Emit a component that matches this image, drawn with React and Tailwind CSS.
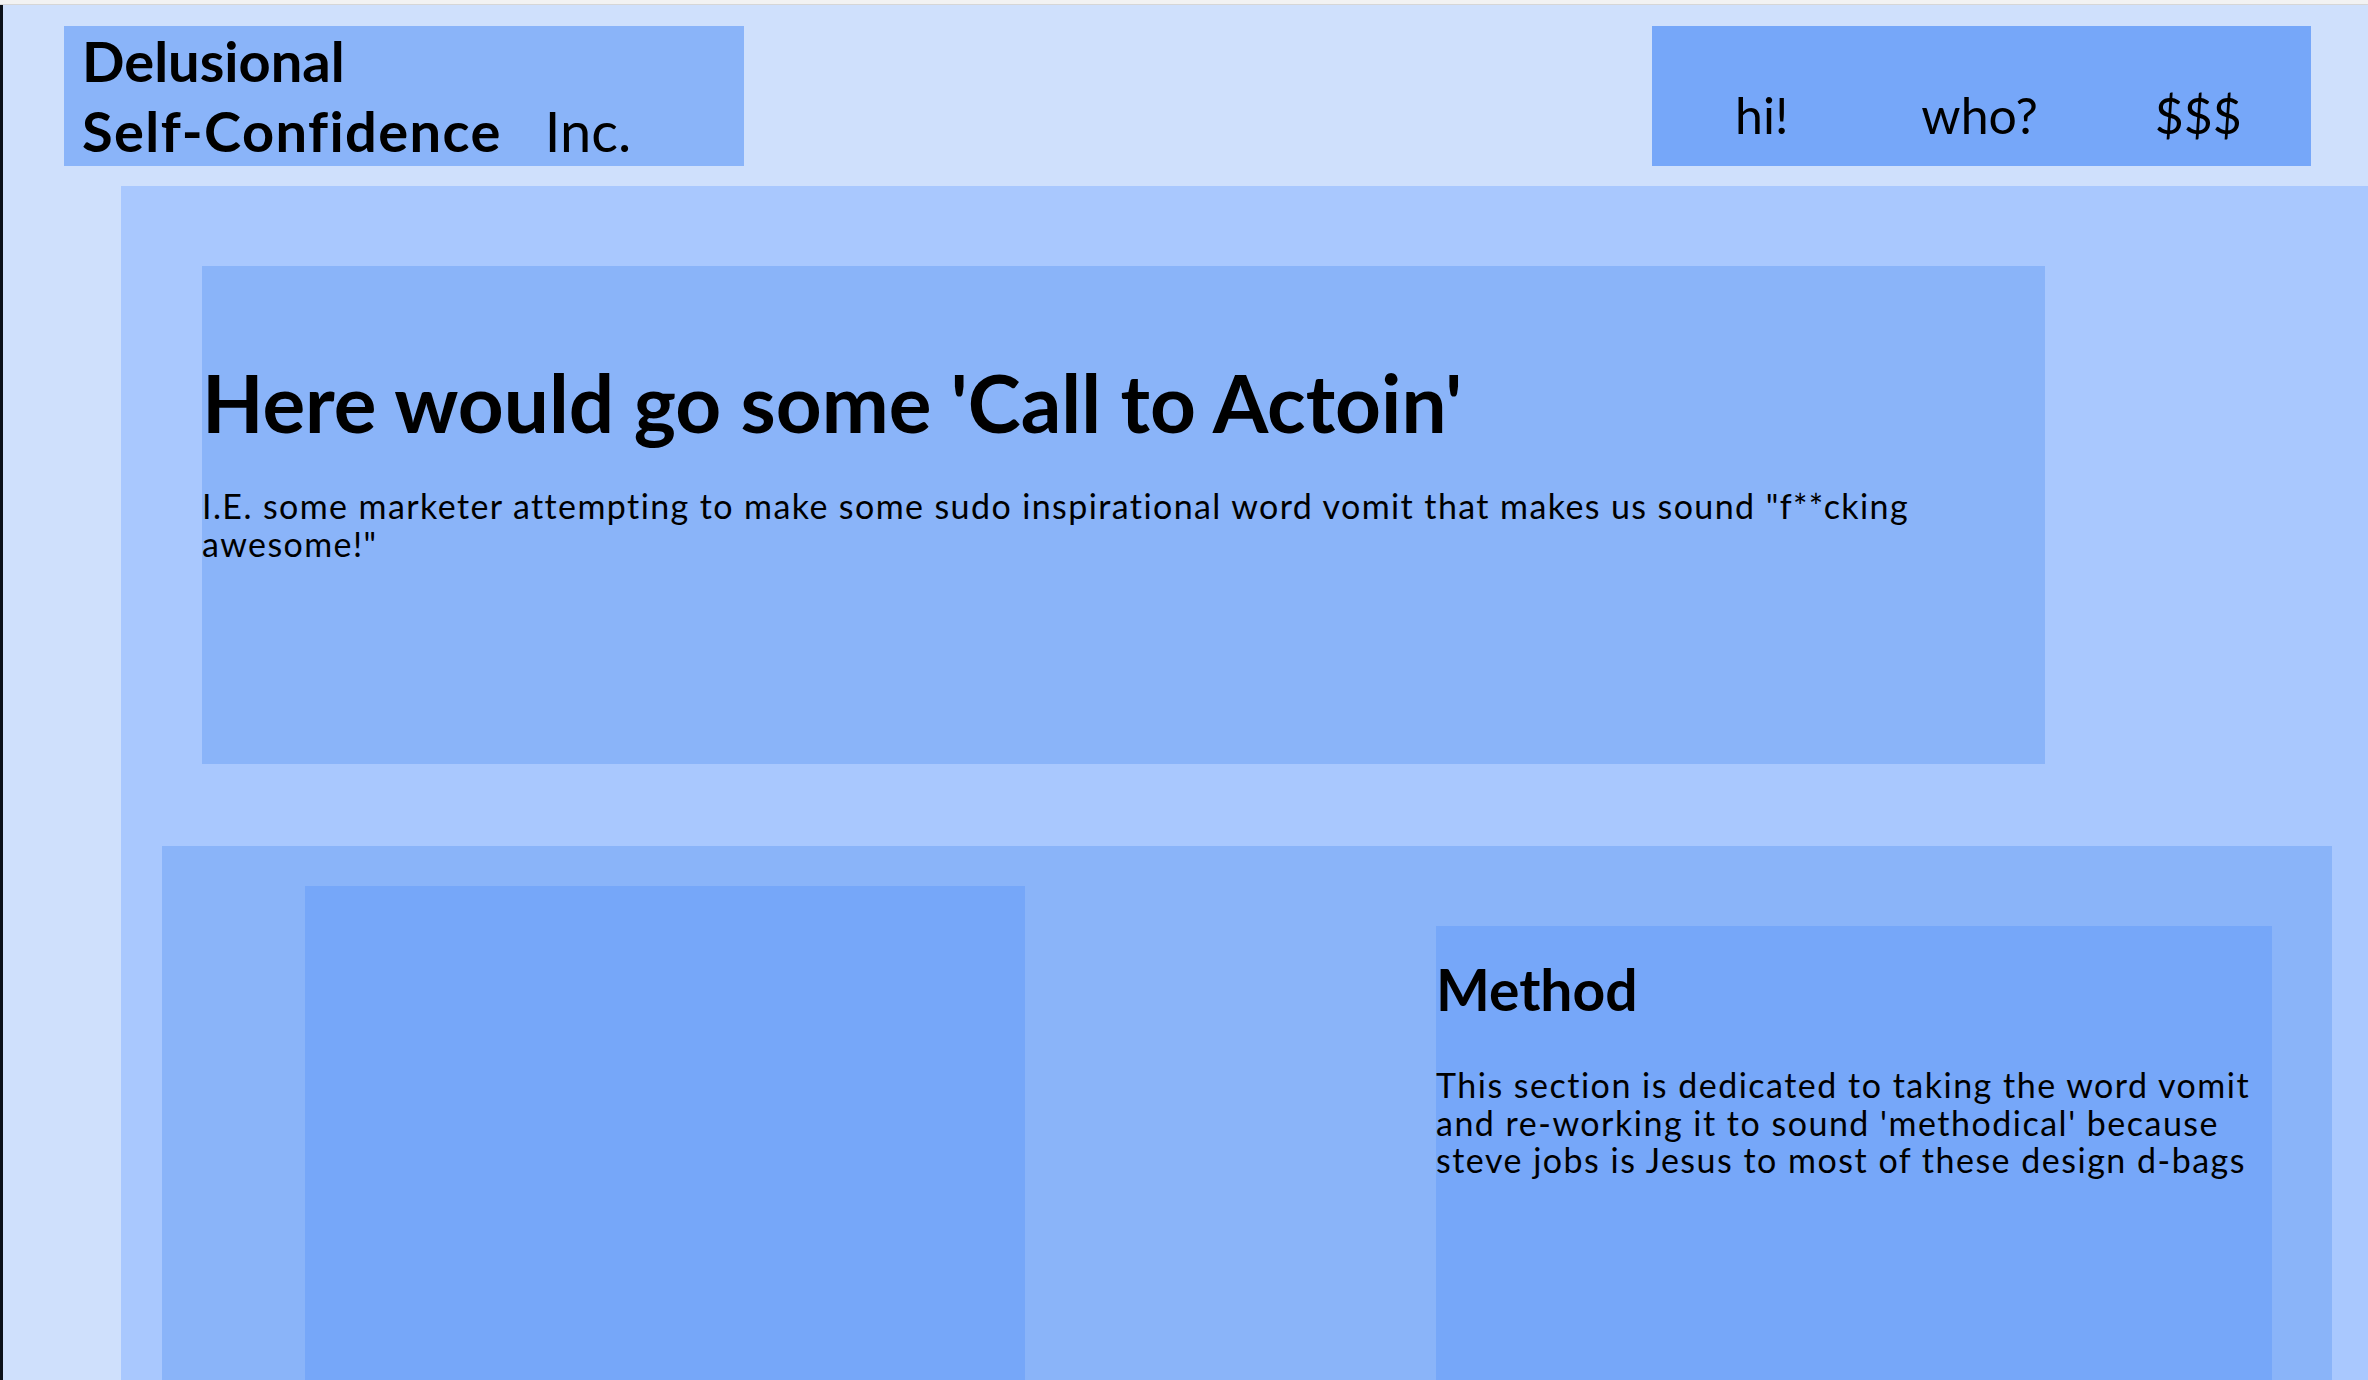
import React from 'react';

const navItems = ['hi!', 'who?', '$$$'];

const App = () => {
  return (
    <div className="w-full h-[1380px] overflow-hidden bg-[#cfe0fc] text-black font-['Lato','Noto_Sans',sans-serif]">
      <div className="h-[5px] bg-[#f2f2f2] border-b border-[#d6d6d6]" />

      <div className="flex h-[1375px]">
        <div className="w-[3px] shrink-0 bg-[#0b1119]" />

        <div className="flex-1 flex flex-col">
          {/* header */}
          <header className="flex items-start justify-between pt-[21px]">
            <div className="ml-[61px] w-[680px] h-[140px] bg-[#8ab4f9] pl-[18px] text-[56px] leading-[70px]">
              <div className="font-bold">Delusional</div>
              <div>
                <span className="font-bold tracking-[1.4px]">Self-Confidence</span>
                <span className="ml-[43px]">Inc.</span>
              </div>
            </div>

            <nav className="mr-[57px] w-[659px] h-[140px] bg-[#76a7f9] pt-[59px] pl-[83px] flex text-[50px] leading-[60px]">
              <span>{navItems[0]}</span>
              <span className="ml-[133px]">{navItems[1]}</span>
              <span className="ml-[117px]">{navItems[2]}</span>
            </nav>
          </header>

          {/* main */}
          <main className="mt-[20px] ml-[118px] flex-1 bg-[#a9c8fe] pt-[80px]">
            <section className="ml-[81px] w-[1843px] h-[498px] bg-[#8ab4f9] pt-[88px]">
              <h1 className="font-bold text-[80px] leading-[96px]">
                Here would go some 'Call to Actoin'
              </h1>
              <p className="mt-[37px] text-[34px] leading-[37.5px] tracking-[1.4px]">
                I.E. some marketer attempting to make some sudo inspirational word vomit that makes us sound "f**cking
                <br />
                awesome!"
              </p>
            </section>

            <section className="mt-[82px] ml-[41px] w-[2170px] h-[600px] bg-[#8ab4f9] flex items-start">
              <div className="ml-[143px] mt-[40px] w-[720px] h-[560px] bg-[#76a7f9]" />

              <div className="ml-auto mr-[60px] mt-[80px] w-[836px] h-[520px] bg-[#76a7f9] pt-[29px]">
                <h2 className="font-bold text-[57px] leading-[68px]">Method</h2>
                <p className="mt-[43px] text-[34px] leading-[37.5px] tracking-[1.5px]">
                  This section is dedicated to taking the word vomit
                  <br />
                  and re-working it to sound 'methodical' because
                  <br />
                  steve jobs is Jesus to most of these design d-bags
                </p>
              </div>
            </section>
          </main>
        </div>
      </div>
    </div>
  );
};

export default App;
